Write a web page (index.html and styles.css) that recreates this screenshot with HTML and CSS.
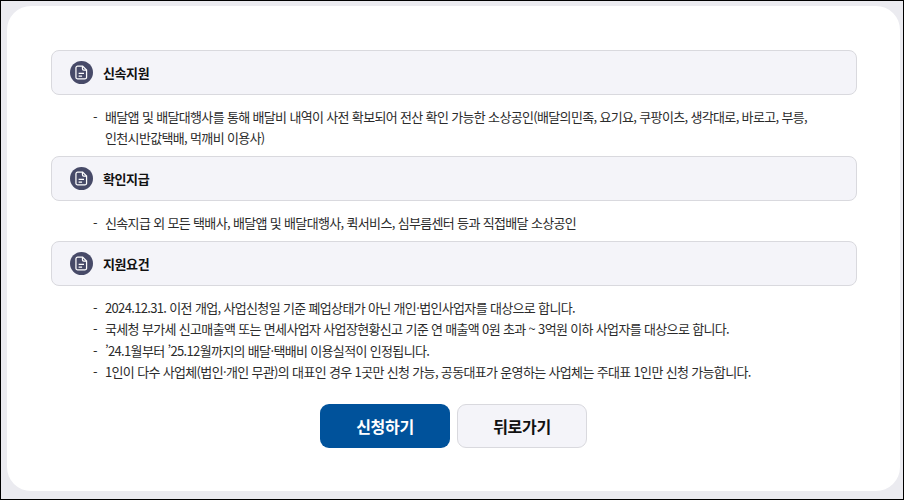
FILE: index.html
```html
<!DOCTYPE html>
<html lang="ko">
<head>
<meta charset="utf-8">
<title>지원대상</title>
<link rel="stylesheet" href="styles.css">
</head>
<body>
<main class="card">
  <section class="sec">
    <h2 class="head"><svg class="ico" viewBox="0 0 24 24"><circle cx="12" cy="12" r="12" fill="#474a68"/><path d="M8 5.3h5.2l4.1 4.1v7.5a1.8 1.8 0 0 1-1.8 1.8H8a1.8 1.8 0 0 1-1.8-1.8V7.1A1.8 1.8 0 0 1 8 5.3z" fill="none" stroke="#fff" stroke-width="1.3"/><path d="M13 5.5v2.6a1.3 1.3 0 0 0 1.3 1.3h2.8M9 13h5.6M9 15.7h3.6" fill="none" stroke="#fff" stroke-width="1.3"/></svg><span>신속지원</span></h2>
    <ul class="list">
      <li>배달앱 및 배달대행사를 통해 배달비 내역이 사전 확보되어 전산 확인 가능한 소상공인(배달의민족, 요기요, 쿠팡이츠, 생각대로, 바로고, 부릉, 인천시반값택배, 먹깨비 이용사)</li>
    </ul>
  </section>
  <section class="sec">
    <h2 class="head"><svg class="ico" viewBox="0 0 24 24"><circle cx="12" cy="12" r="12" fill="#474a68"/><path d="M8 5.3h5.2l4.1 4.1v7.5a1.8 1.8 0 0 1-1.8 1.8H8a1.8 1.8 0 0 1-1.8-1.8V7.1A1.8 1.8 0 0 1 8 5.3z" fill="none" stroke="#fff" stroke-width="1.3"/><path d="M13 5.5v2.6a1.3 1.3 0 0 0 1.3 1.3h2.8M9 13h5.6M9 15.7h3.6" fill="none" stroke="#fff" stroke-width="1.3"/></svg><span>확인지급</span></h2>
    <ul class="list">
      <li>신속지급 외 모든 택배사, 배달앱 및 배달대행사, 퀵서비스, 심부름센터 등과 직접배달 소상공인</li>
    </ul>
  </section>
  <section class="sec">
    <h2 class="head"><svg class="ico" viewBox="0 0 24 24"><circle cx="12" cy="12" r="12" fill="#474a68"/><path d="M8 5.3h5.2l4.1 4.1v7.5a1.8 1.8 0 0 1-1.8 1.8H8a1.8 1.8 0 0 1-1.8-1.8V7.1A1.8 1.8 0 0 1 8 5.3z" fill="none" stroke="#fff" stroke-width="1.3"/><path d="M13 5.5v2.6a1.3 1.3 0 0 0 1.3 1.3h2.8M9 13h5.6M9 15.7h3.6" fill="none" stroke="#fff" stroke-width="1.3"/></svg><span>지원요건</span></h2>
    <ul class="list">
      <li>2024.12.31. 이전 개업, 사업신청일 기준 폐업상태가 아닌 개인·법인사업자를 대상으로 합니다.</li>
      <li>국세청 부가세 신고매출액 또는 면세사업자 사업장현황신고 기준 연 매출액 0원 초과 ~ 3억원 이하 사업자를 대상으로 합니다.</li>
      <li>’24.1월부터 ’25.12월까지의 배달·택배비 이용실적이 인정됩니다.</li>
      <li>1인이 다수 사업체(법인·개인 무관)의 대표인 경우 1곳만 신청 가능, 공동대표가 운영하는 사업체는 주대표 1인만 신청 가능합니다.</li>
    </ul>
  </section>
  <div class="actions">
    <a class="btn primary" href="#">신청하기</a>
    <a class="btn secondary" href="#">뒤로가기</a>
  </div>
</main>
</body>
</html>
```
FILE: styles.css
```css
* { box-sizing: border-box; }
html, body { margin: 0; height: 100%; }
body {
  width: 904px;
  height: 500px;
  overflow: hidden;
  background: #ebebf0;
  border: 1px solid #000;
  padding: 5px 3px 8px 6px;
  font-family: "Noto Sans CJK KR", "Noto Sans", sans-serif;
  color: #222;
}
.card {
  height: 485px;
  background: #fff;
  border-radius: 24px;
  padding: 44px 43px 0 44px;
}
.head {
  margin: 0;
  height: 45px;
  display: flex;
  align-items: center;
  gap: 10px;
  padding-left: 18px;
  background: #f4f4f9;
  border: 1px solid #d9d9de;
  border-radius: 8px;
  font-size: 13px;
  font-weight: 700;
  color: #111;
  letter-spacing: -0.4px;
}
.ico { width: 23px; height: 23px; flex: none; }
.list {
  list-style: none;
  margin: 0;
  padding: 10.5px 40px 0 42px;
  font-size: 13px;
  line-height: 21.5px;
  letter-spacing: -0.66px;
  color: #2b2b2b;
  word-break: keep-all;
  height: 61px;
}
.list li { position: relative; padding-left: 12px; }
.list li::before { content: "-"; position: absolute; left: 0; top: 0; }
.sec:nth-of-type(2) .list { height: 40px; }
.sec:nth-of-type(3) .list { height: 118px; }
.actions { display: flex; justify-content: center; gap: 7px; padding-right: 1px; }
.btn {
  width: 130px;
  height: 44px;
  display: flex;
  align-items: center;
  justify-content: center;
  border-radius: 9px;
  font-size: 16px;
  font-weight: 700;
  text-decoration: none;
  letter-spacing: -0.3px;
}
.primary { background: #00529b; color: #fff; }
.secondary { background: #f4f4f9; color: #111; border: 1px solid #d9d9de; }
```
